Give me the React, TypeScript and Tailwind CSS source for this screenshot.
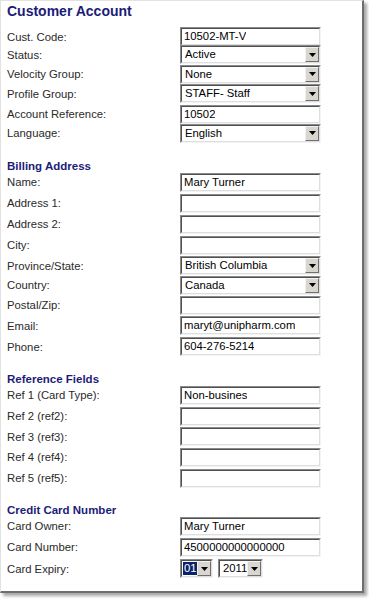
import type { ReactNode } from "react";

type Field =
  | { label: string; kind: "text"; value?: string; h: number }
  | { label: string; kind: "select"; value: string; h: number };

const customer: Field[] = [
  { label: "Cust. Code:", kind: "text", value: "10502-MT-V", h: 18.3 },
  { label: "Status:", kind: "select", value: "Active", h: 19.3 },
  { label: "Velocity Group:", kind: "select", value: "None", h: 19.7 },
  { label: "Profile Group:", kind: "select", value: "STAFF- Staff", h: 20.3 },
  { label: "Account Reference:", kind: "text", value: "10502", h: 19 },
  { label: "Language:", kind: "select", value: "English", h: 19 },
];

const billing: Field[] = [
  { label: "Name:", kind: "text", value: "Mary Turner", h: 21 },
  { label: "Address 1:", kind: "text", h: 21 },
  { label: "Address 2:", kind: "text", h: 21 },
  { label: "City:", kind: "text", h: 20.5 },
  { label: "Province/State:", kind: "select", value: "British Columbia", h: 19.5 },
  { label: "Country:", kind: "select", value: "Canada", h: 20 },
  { label: "Postal/Zip:", kind: "text", h: 20.5 },
  { label: "Email:", kind: "text", value: "maryt@unipharm.com", h: 21 },
  { label: "Phone:", kind: "text", value: "604-276-5214", h: 19 },
];

const refs: Field[] = [
  { label: "Ref 1 (Card Type):", kind: "text", value: "Non-busines", h: 21 },
  { label: "Ref 2 (ref2):", kind: "text", h: 20.6 },
  { label: "Ref 3 (ref3):", kind: "text", h: 20.6 },
  { label: "Ref 4 (ref4):", kind: "text", h: 21 },
  { label: "Ref 5 (ref5):", kind: "text", h: 19 },
];

function Sunken({ w, children }: { w: number; children: ReactNode }) {
  return (
    <div
      className="flex h-[19px] shrink-0 border-t border-l border-r border-b border-t-[#8a8a8a] border-l-[#8a8a8a] border-r-[#f4f4f4] border-b-[#f4f4f4]"
      style={{ width: w }}
    >
      <div className="flex min-w-0 flex-1 border-t border-l border-r border-b border-t-[#505050] border-l-[#505050] border-r-[#dedede] border-b-[#dedede] bg-white">
        {children}
      </div>
    </div>
  );
}

function DropButton() {
  return (
    <div className="flex h-full w-[14px] shrink-0 items-center justify-center border-t border-l border-r border-b border-t-[#f2f2f2] border-l-[#f2f2f2] border-r-[#707070] border-b-[#707070] bg-[#d8d6cf]">
      <svg width="7" height="4" viewBox="0 0 7 4">
        <path d="M0 0h7L3.5 4z" fill="#000" />
      </svg>
    </div>
  );
}

function TextBox({ value }: { value?: string }) {
  return (
    <Sunken w={141}>
      <span className="truncate pl-[2px] text-[11.3px] leading-[15px] text-black">{value ?? ""}</span>
    </Sunken>
  );
}

function SelectBox({ value, w = 141, selected = false }: { value: string; w?: number; selected?: boolean }) {
  return (
    <Sunken w={w}>
      <div className="flex min-w-0 flex-1 items-center overflow-hidden pl-[1px]">
        <span
          className={
            selected
              ? "whitespace-nowrap bg-[#0a246a] px-[1px] text-[11.3px] leading-[13px] text-white"
              : "whitespace-nowrap px-[2px] text-[11.3px] leading-[15px] text-black"
          }
        >
          {value}
        </span>
      </div>
      <DropButton />
    </Sunken>
  );
}

function Row({ label, h, children }: { label: string; h: number; children: ReactNode }) {
  return (
    <div className="flex items-start" style={{ height: h }}>
      <div className="flex h-[19px] w-[173px] shrink-0 items-center text-[11.3px] leading-[14px] text-[#2a2a2a]">
        {label}
      </div>
      {children}
    </div>
  );
}

function Rows({ fields }: { fields: Field[] }) {
  return (
    <div className="flex flex-col">
      {fields.map((f) => (
        <Row key={f.label} label={f.label} h={f.h}>
          {f.kind === "text" ? <TextBox value={f.value} /> : <SelectBox value={f.value} />}
        </Row>
      ))}
    </div>
  );
}

function Heading({ children, className }: { children: ReactNode; className: string }) {
  return (
    <h2 className={`h-[14px] text-[11.5px] font-bold leading-[14px] text-[#1c1c78] ${className}`}>
      {children}
    </h2>
  );
}

export default function App() {
  return (
    <div className="h-[599px] w-[369px] bg-white" style={{ fontFamily: '"Liberation Sans", Arial, sans-serif' }}>
      <div className="h-[593px] w-[364px] border-t border-l border-r-2 border-b-2 border-t-[#e2e2e2] border-l-[#e2e2e2] border-r-[#6e6e6e] border-b-[#6e6e6e] bg-white pl-[6px] pt-[1px] shadow-[3px_3px_3px_rgba(0,0,0,0.35)]">
        <h1 className="h-[17px] pt-[1px] text-[14px] font-bold leading-[17px] text-[#1c1c78]">Customer Account</h1>
        <div className="mt-[8px]">
          <Rows fields={customer} />
        </div>

        <Heading className="mt-[16px]">Billing Address</Heading>
        <Rows fields={billing} />

        <Heading className="mt-[15.5px]">Reference Fields</Heading>
        <Rows fields={refs} />

        <Heading className="mt-[15px]">Credit Card Number</Heading>
        <Row label="Card Owner:" h={21}>
          <TextBox value="Mary Turner" />
        </Row>
        <Row label="Card Number:" h={21.3}>
          <TextBox value="4500000000000000" />
        </Row>
        <Row label="Card Expiry:" h={19}>
          <div className="flex gap-[5px]">
            <SelectBox value="01" w={33} selected />
            <SelectBox value="2011" w={45} />
          </div>
        </Row>
      </div>
    </div>
  );
}
